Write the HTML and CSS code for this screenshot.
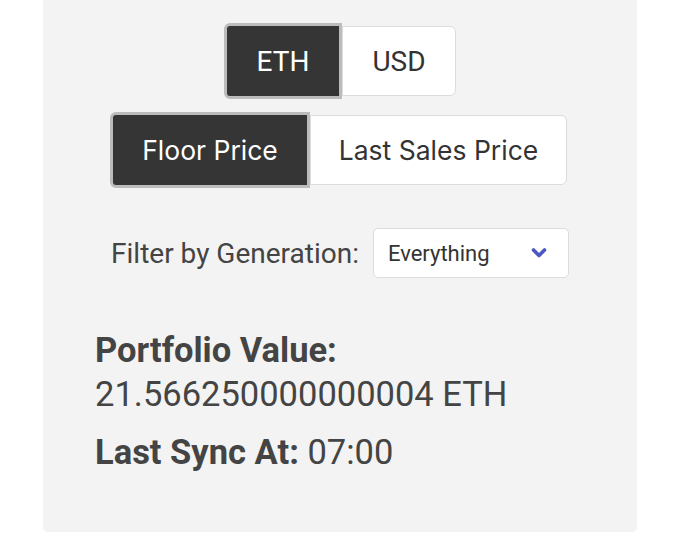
FILE: index.html
```html
<!DOCTYPE html>
<html>
<head>
<meta charset="utf-8">
<link rel="stylesheet" href="styles.css">
</head>
<body>
<div class="panel">
  <div class="toggle toggle-currency">
    <button class="seg active">ETH</button>
    <button class="seg">USD</button>
  </div>
  <div class="toggle toggle-price">
    <button class="seg active">Floor Price</button>
    <button class="seg">Last Sales Price</button>
  </div>
  <div class="filter">
    <span class="filter-label">Filter by Generation:</span>
    <div class="select">
      <span>Everything</span>
      <svg class="chev" width="16" height="12" viewBox="0 0 16 12"><path d="M2.5 3 L8 8.5 L13.5 3" fill="none" stroke="#4a58c0" stroke-width="3.6" stroke-linecap="round" stroke-linejoin="round"/></svg>
    </div>
  </div>
  <div class="stats">
    <div class="stat-title">Portfolio Value:</div>
    <div class="stat-value">21.566250000000004 ETH</div>
    <div class="stat-sync"><b>Last Sync At:</b> 07:00</div>
  </div>
</div>
</body>
</html>
```

FILE: styles.css
```css
html, body { margin: 0; padding: 0; background: #fff; }
body { font-family: Roboto, "Liberation Sans", sans-serif; color: #333; }
.panel {
  width: 594px;
  margin: 0 auto;
  height: 532px;
  box-sizing: border-box;
  background: #f3f3f3;
  border-radius: 0 0 5px 5px;
  padding-top: 23px;
  display: flex;
  flex-direction: column;
  align-items: center;
}
.toggle { display: flex; }
.seg {
  font: inherit;
  background: #fff;
  color: #333;
  border: 1px solid #dcdcdc;
  border-radius: 0 6px 6px 0;
  margin: 3px 0;
  padding: 0;
}
.seg.active {
  background: #353535;
  color: #fff;
  border: 3px solid #bcbcbc;
  border-radius: 6px 0 0 6px;
  margin: 0;
}
.toggle-currency .seg { font-size: 28px; height: 70px; }
.toggle-currency .seg.active { width: 118px; height: 76px; }
.toggle-currency .seg:not(.active) { width: 114px; }
.toggle-price { margin-top: 13px; margin-right: 3px; font-family: Inter, Roboto, sans-serif; }
.toggle-price .seg { font-size: 26.5px; height: 70px; }
.toggle-price .seg.active { width: 200px; height: 76px; }
.toggle-price .seg:not(.active) { width: 257px; }
.filter {
  margin-top: 40px;
  display: flex;
  align-items: center;
  gap: 14px;
}
.filter-label { font-size: 28px; color: #444; }
.select {
  width: 196px;
  height: 50px;
  box-sizing: border-box;
  background: #fff;
  border: 1px solid #dcdcdc;
  border-radius: 5px;
  display: flex;
  align-items: center;
  justify-content: space-between;
  padding: 0 21px 0 14px;
  font-size: 22px;
  color: #333;
}
.chev { display: block; }
.stats {
  align-self: stretch;
  padding-left: 52px;
  margin-top: 50px;
  color: #444;
}
.stat-title { font-weight: 700; font-size: 34.5px; line-height: 44px; }
.stat-value { font-size: 34.5px; line-height: 44px; }
.stat-sync { font-size: 34.5px; line-height: 44px; margin-top: 14px; }
.stat-sync b { font-weight: 700; }
```
